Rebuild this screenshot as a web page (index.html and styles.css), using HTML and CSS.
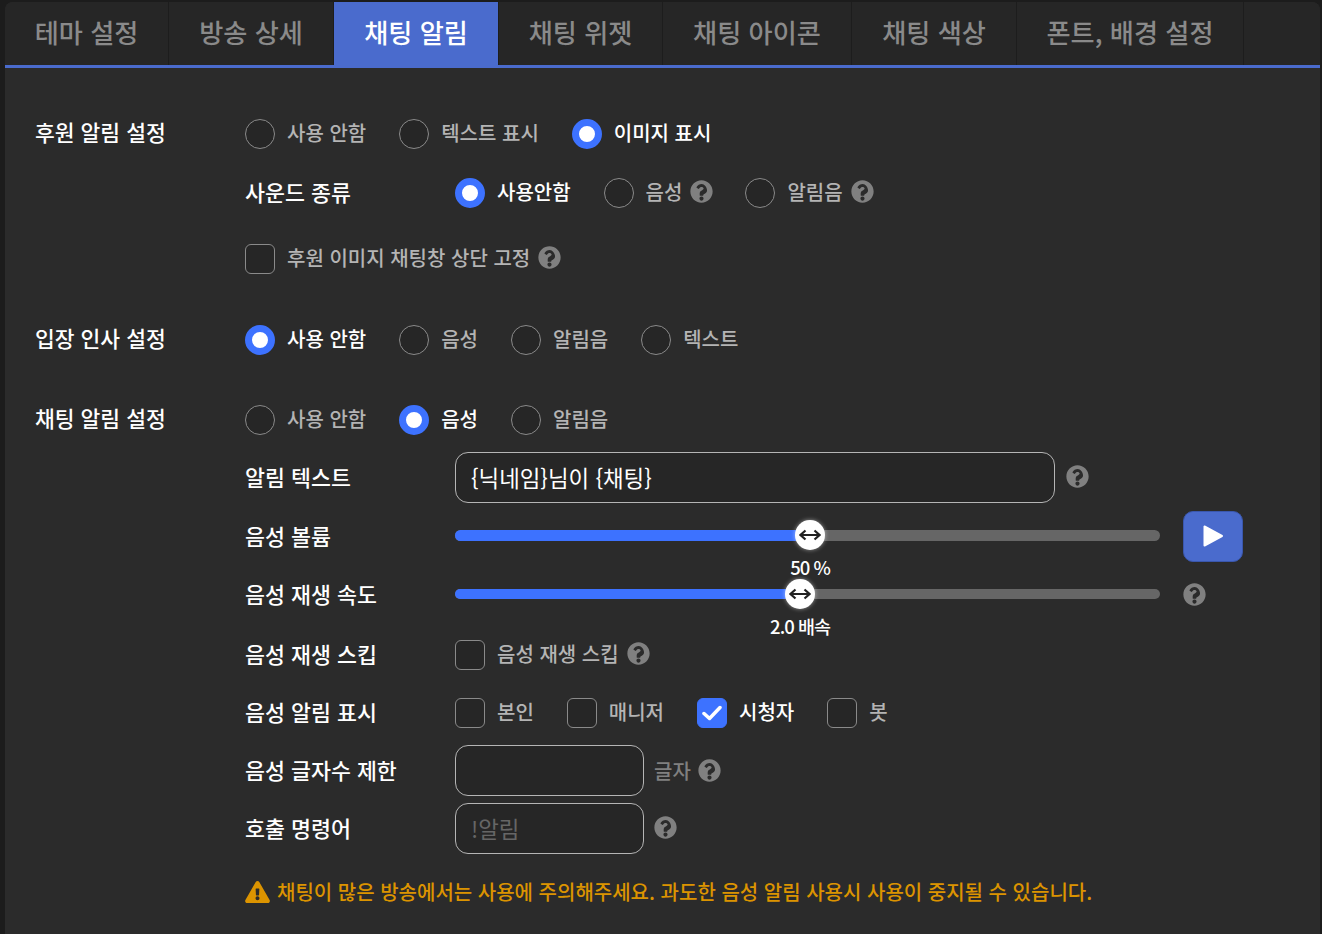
FILE: index.html
```html
<!DOCTYPE html>
<html lang="ko">
<head>
  <meta charset="UTF-8">
  <title>채팅 알림</title>
  <link rel="stylesheet" href="styles.css">
</head>
<body>
<svg class="defs" width="0" height="0">
  <symbol id="help" viewBox="0 0 512 512">
    <path d="M504 256c0 137-111 248-248 248S8 393 8 256 119 8 256 8s248 111 248 248zM262.700 90c-54.500 0-89.300 23-116.500 63.800-3.500 5.300-2.400 12.400 2.700 16.300l34.700 26.300c5.200 3.900 12.600 3 16.700-2.100 17.900-22.700 30.100-35.800 57.300-35.800 20.400 0 45.700 13.100 45.700 33 0 15-12.400 22.700-32.600 34-23.600 13.200-54.800 29.700-54.800 70.900V340c0 6.600 5.400 12 12 12h56c6.600 0 12-5.400 12-12v-6c0-28.600 83.500-29.800 83.500-107C379.400 168.900 319 90 262.700 90zM256 368c-25.500 0-46.200 20.700-46.200 46.200 0 25.500 20.700 46.200 46.200 46.200s46.200-20.700 46.200-46.200c0-25.500-20.700-46.200-46.200-46.200z"/>
  </symbol>
</svg>
<div class="panel">
  <div class="tabs">
    <div class="tab tab-1">테마 설정</div>
    <div class="tab tab-2">방송 상세</div>
    <div class="tab tab-3 active">채팅 알림</div>
    <div class="tab tab-4">채팅 위젯</div>
    <div class="tab tab-5">채팅 아이콘</div>
    <div class="tab tab-6">채팅 색상</div>
    <div class="tab tab-7">폰트, 배경 설정</div>
  </div>

  <div class="content">
    <section class="group group-donate">
      <h3 class="group-title">후원 알림 설정</h3>
      <div class="group-body">
        <div class="options row-first">
          <label class="opt"><i class="radio"></i>사용 안함</label>
          <label class="opt"><i class="radio"></i>텍스트 표시</label>
          <label class="opt on"><i class="radio"></i>이미지 표시</label>
        </div>
        <div class="row row-sound">
          <span class="row-label">사운드 종류</span>
          <div class="options">
            <label class="opt on"><i class="radio"></i>사용안함</label>
            <label class="opt"><i class="radio"></i>음성<svg class="help"><use href="#help"/></svg></label>
            <label class="opt"><i class="radio"></i>알림음<svg class="help"><use href="#help"/></svg></label>
          </div>
        </div>
        <label class="opt row-fix"><i class="check"></i>후원 이미지 채팅창 상단 고정<svg class="help"><use href="#help"/></svg></label>
      </div>
    </section>

    <section class="group group-enter">
      <h3 class="group-title">입장 인사 설정</h3>
      <div class="group-body">
        <div class="options row-first">
          <label class="opt on"><i class="radio"></i>사용 안함</label>
          <label class="opt"><i class="radio"></i>음성</label>
          <label class="opt"><i class="radio"></i>알림음</label>
          <label class="opt"><i class="radio"></i>텍스트</label>
        </div>
      </div>
    </section>

    <section class="group group-chat">
      <h3 class="group-title">채팅 알림 설정</h3>
      <div class="group-body">
        <div class="options row-first">
          <label class="opt"><i class="radio"></i>사용 안함</label>
          <label class="opt on"><i class="radio"></i>음성</label>
          <label class="opt"><i class="radio"></i>알림음</label>
        </div>
        <div class="row row-text">
          <span class="row-label">알림 텍스트</span>
          <div class="field field-wide">{닉네임}님이 {채팅}</div>
          <svg class="help help-text"><use href="#help"/></svg>
        </div>
        <div class="row row-volume">
          <span class="row-label">음성 볼륨</span>
          <div class="slider">
            <div class="track"><div class="fill" style="width: 50.350%"></div></div>
            <div class="thumb" style="left: 50.350%">
              <svg viewBox="0 0 22 12" width="22" height="12"><path d="M1.500 6h19M6.500 1.500 1.500 6l5 4.500M15.500 1.500l5 4.500-5 4.500"/></svg>
              <span class="thumb-value">50 %</span>
            </div>
          </div>
          <button class="play" type="button"><svg viewBox="0 0 20 22" width="20" height="22"><path d="M1.500 1.500v19L19 11z"/></svg></button>
        </div>
        <div class="row row-speed">
          <span class="row-label">음성 재생 속도</span>
          <div class="slider slider-thin">
            <div class="track"><div class="fill" style="width: 48.940%"></div></div>
            <div class="thumb" style="left: 48.940%">
              <svg viewBox="0 0 22 12" width="22" height="12"><path d="M1.500 6h19M6.500 1.500 1.500 6l5 4.500M15.500 1.500l5 4.500-5 4.500"/></svg>
              <span class="thumb-value">2.0 배속</span>
            </div>
          </div>
          <svg class="help help-speed"><use href="#help"/></svg>
        </div>
        <div class="row row-skip">
          <span class="row-label">음성 재생 스킵</span>
          <label class="opt"><i class="check"></i>음성 재생 스킵<svg class="help"><use href="#help"/></svg></label>
        </div>
        <div class="row row-show">
          <span class="row-label">음성 알림 표시</span>
          <div class="options">
            <label class="opt"><i class="check"></i>본인</label>
            <label class="opt"><i class="check"></i>매니저</label>
            <label class="opt on"><i class="check"><svg viewBox="0 0 20 20" width="20" height="20"><path d="M2 10.500l5.500 5L18 4.500"/></svg></i>시청자</label>
            <label class="opt"><i class="check"></i>봇</label>
          </div>
        </div>
        <div class="row row-limit">
          <span class="row-label">음성 글자수 제한</span>
          <div class="field field-small"></div>
          <span class="unit">글자</span>
          <svg class="help"><use href="#help"/></svg>
        </div>
        <div class="row row-command">
          <span class="row-label">호출 명령어</span>
          <div class="field field-small placeholder">!알림</div>
          <svg class="help"><use href="#help"/></svg>
        </div>
        <p class="warning">
          <svg viewBox="0 0 576 512" width="25" height="22"><path d="M569.500 440C588 472 565 512 528 512H48c-37 0-60-40-41.500-72l240-416c18.500-32 64.500-32 83 0l240 416zM288 354c-25.400 0-46 20.600-46 46s20.600 46 46 46 46-20.600 46-46-20.600-46-46-46zm-43.700-165.400 7.400 136c.3 6.400 5.600 11.400 12 11.400h48.600c6.400 0 11.700-5 12-11.400l7.400-136c.4-6.900-5.100-12.600-12-12.600h-63.400c-6.900 0-12.400 5.700-12 12.600z"/></svg>
          채팅이 많은 방송에서는 사용에 주의해주세요. 과도한 음성 알림 사용시 사용이 중지될 수 있습니다.
        </p>
      </div>
    </section>
  </div>
</div>
</body>
</html>
```

FILE: styles.css
```css
* { box-sizing: border-box; }
html, body {
  margin: 0;
  height: 100%;
}
body {
  background: #1c1c1c;
  font-family: "Noto Sans CJK KR", "Noto Sans", sans-serif;
  overflow: hidden;
}
.defs { position: absolute; }
.panel {
  height: 932px;
  margin: 2px 2px 0 5px;
  background: #2b2b2b;
  border-radius: 8px 8px 0 0;
  overflow: hidden;
}

/* tabs */
.tabs {
  display: flex;
  height: 66px;
  background: #262626;
  border-bottom: 3px solid #4a6bcd;
}
.tab {
  display: flex;
  align-items: center;
  justify-content: center;
  border-right: 1px solid #1d1d1d;
  color: #8a8a8a;
  font-size: 26.200px;
  font-weight: 500;
  line-height: 1;
  padding-bottom: 3px;
}
.tab.active {
  background: #4a6bcd;
  color: #fff;
}
.tab-1 { width: 164px; }
.tab-2 { width: 165px; }
.tab-3 { width: 165px; }
.tab-4 { width: 164px; }
.tab-5 { width: 189px; }
.tab-6 { width: 165px; }
.tab-7 { width: 227px; }

/* groups */
.content { padding-top: 51px; }
.group {
  display: flex;
  padding-left: 30px;
}
.group-title {
  width: 210px;
  flex: none;
  margin: 0;
  color: #fff;
  font-size: 21.500px;
  font-weight: 500;
  line-height: 26px;
}
.group-body { flex: 1; }
.group-enter { margin-top: 51px; }
.group-chat { margin-top: 50px; }

.options {
  display: flex;
  align-items: center;
}
.opt {
  display: flex;
  align-items: flex-start;
  color: #b4b4b4;
  font-size: 20px;
  font-weight: 500;
  line-height: 27px;
  margin-right: 33px;
  white-space: nowrap;
}
.opt.on {
  color: #fff;
}
.radio, .check {
  flex: none;
  display: block;
  width: 30px;
  height: 30px;
  margin-right: 12px;
  border: 1px solid #8a8a8a;
  background: #262626;
}
.radio { border-radius: 50%; }
.check { border-radius: 6px; }
.opt.on .radio {
  background: #fff;
  border: 7px solid #3d72ff;
}
.opt.on .check {
  background: #3d72ff;
  border-color: #3d72ff;
  padding: 4px;
}
.check svg {
  display: block;
  fill: none;
  stroke: #fff;
  stroke-width: 3.500;
  stroke-linecap: round;
  stroke-linejoin: round;
}
.help {
  flex: none;
  width: 23px;
  height: 23px;
  margin-left: 8px;
  fill: #808080;
}
.opt .help { margin: 2px -1px 0 8px; }

/* rows */
.row {
  display: flex;
  align-items: center;
}
.row-label {
  width: 210px;
  flex: none;
  color: #fff;
  font-size: 21.700px;
  font-weight: 500;
  line-height: 27px;
  margin-bottom: 3px;
}
.row-volume .row-label { margin: 1px 0 0; }
.row-speed .row-label { margin: 0 0 1px; }
.row-sound { margin-top: 29px; }
.row-fix { margin-top: 36px; }
.row-text { margin-top: 17px; }
.row-volume { margin-top: 7px; height: 50px; }
.row-speed { margin-top: 9px; height: 50px; }
.row-skip { margin-top: 11px; height: 50px; }
.row-show { margin-top: 8px; height: 50px; }
.row-limit { margin-top: 7px; }
.row-command { margin-top: 7px; }

.field {
  height: 51px;
  padding: 0 15px;
  border: 1px solid #b5b5b5;
  border-radius: 13px;
  background: #262626;
  color: #fff;
  font-size: 22.400px;
  line-height: 49px;
}
.field-wide { width: 600px; }
.field-small { width: 189px; }
.placeholder { color: #666; }
.help-text { margin-left: 11px; margin-top: -3px; }
.row-limit .unit {
  margin-left: 10px;
  color: #808080;
  font-size: 20px;
  font-weight: 500;
}
.row-limit .help { margin-left: 7px; }
.row-command .help { margin-left: 10px; margin-top: -3px; }

/* slider */
.slider {
  position: relative;
  width: 705px;
  height: 11px;
  flex: none;
}
.slider-thin { height: 10px; }
.track {
  height: 100%;
  background: #666;
  border-radius: 6px;
  overflow: hidden;
}
.fill {
  height: 100%;
  background: #3d72ff;
}
.thumb {
  position: absolute;
  top: 50%;
  width: 30px;
  height: 30px;
  margin: -15px 0 0 -15px;
  display: flex;
  align-items: center;
  justify-content: center;
  background: #fff;
  border-radius: 50%;
  box-shadow: 0 0 4px rgba(255,255,255,0.5);
}
.thumb svg {
  fill: none;
  stroke: #222;
  stroke-width: 2.200;
}
.thumb-value {
  position: absolute;
  top: 35px;
  left: 50%;
  transform: translateX(-50%);
  color: #fff;
  font-size: 18.500px;
  font-weight: 500;
  line-height: 24px;
  letter-spacing: -1px;
  white-space: nowrap;
}
.play {
  width: 60px;
  height: 51px;
  margin: 2px 0 0 23px;
  padding: 0;
  display: flex;
  align-items: center;
  justify-content: center;
  background: #4a6bcd;
  border: 1px solid #3a57ad;
  border-radius: 10px;
}
.play svg {
  fill: #fff;
  stroke: #fff;
  stroke-width: 2;
  stroke-linejoin: round;
}
.help-speed { margin-left: 23px; }

/* warning */
.warning {
  display: flex;
  align-items: center;
  gap: 7px;
  margin: 23px 0 0;
  color: #dc9400;
  font-size: 20px;
  font-weight: 500;
  line-height: 30px;
  white-space: nowrap;
}
.warning svg { fill: #dc9400; flex: none; }
```
